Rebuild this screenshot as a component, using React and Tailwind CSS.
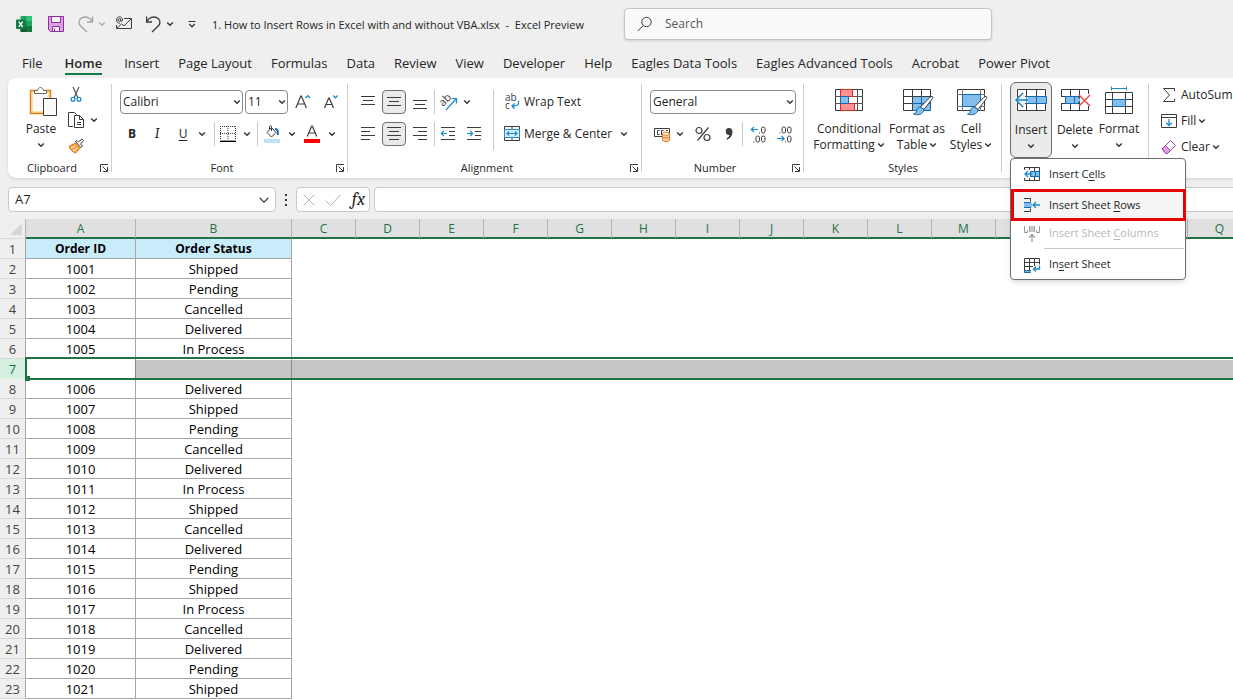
const TABS = [
  "File",
  "Home",
  "Insert",
  "Page Layout",
  "Formulas",
  "Data",
  "Review",
  "View",
  "Developer",
  "Help",
  "Eagles Data Tools",
  "Eagles Advanced Tools",
  "Acrobat",
  "Power Pivot",
];

const COLUMNS = ["C", "D", "E", "F", "G", "H", "I", "J", "K", "L", "M", "N", "O", "P", "Q"];

const ORDERS = [
  ["1001", "Shipped"],
  ["1002", "Pending"],
  ["1003", "Cancelled"],
  ["1004", "Delivered"],
  ["1005", "In Process"],
  null,
  ["1006", "Delivered"],
  ["1007", "Shipped"],
  ["1008", "Pending"],
  ["1009", "Cancelled"],
  ["1010", "Delivered"],
  ["1011", "In Process"],
  ["1012", "Shipped"],
  ["1013", "Cancelled"],
  ["1014", "Delivered"],
  ["1015", "Pending"],
  ["1016", "Shipped"],
  ["1017", "In Process"],
  ["1018", "Cancelled"],
  ["1019", "Delivered"],
  ["1020", "Pending"],
  ["1021", "Shipped"],
];

const INK = "#3b3b3b";
const BLUE = "#1e8bcd";

function Icon({ w = 16, h = 16, className = "", children }) {
  return (
    <svg
      width={w}
      height={h}
      viewBox={`0 0 ${w} ${h}`}
      fill="none"
      stroke={INK}
      className={`shrink-0 overflow-visible ${className}`}
      aria-hidden="true"
    >
      {children}
    </svg>
  );
}

function Chevron({ color = "#333", className = "" }) {
  return (
    <Icon w={8} h={8} className={className}>
      <path d="M1.2 2.5 4 5.2 6.8 2.5" stroke={color} strokeWidth="1.4" />
    </Icon>
  );
}

function ChevronButton({ label, className = "w-3" }) {
  return (
    <button aria-label={label} className={`flex h-6 items-center justify-center ${className}`}>
      <Chevron />
    </button>
  );
}

function ToolButton({ label, active, className = "w-[26px]", children }) {
  return (
    <button
      aria-label={label}
      className={`flex h-6 shrink-0 items-center justify-center ${className} ${
        active ? "rounded border border-[#6e6e6e] bg-[#ebebeb]" : ""
      }`}
    >
      {children}
    </button>
  );
}

function Divider() {
  return <div className="h-6 w-px shrink-0 bg-[#c8c8c8]" />;
}

function Combo({ label, value, className }) {
  return (
    <div className={`relative h-6 ${className}`}>
      <select
        aria-label={label}
        className="h-6 w-full appearance-none rounded border border-[#8a8a8a] bg-white pl-0.5 text-xs text-[#1f1f1f]"
      >
        <option>{value}</option>
      </select>
      <Chevron className="pointer-events-none absolute right-0.5 top-2" />
    </div>
  );
}

function Group({ title, launcher, className, children }) {
  return (
    <section className={`relative flex shrink-0 flex-col ${className}`}>
      <div className="h-20">{children}</div>
      <div
        className={`flex h-5 items-center justify-center text-[11px] ${launcher ? "pr-4" : ""}`}
      >
        {title}
      </div>
      {launcher && (
        <button aria-label={`${title} settings`} className="absolute bottom-1.5 right-1">
          <Icon w={8} h={8}>
            <path d="M.5 8V.5H8M2.5 2.5 7 7M7.5 3v4.5H3" />
          </Icon>
        </button>
      )}
      <div className="absolute bottom-1.5 right-0 top-1.5 w-px bg-[#d0d0d0]" />
    </section>
  );
}

function Lines({ rows }) {
  return (
    <Icon>
      {rows.map(([x, y, w]) => (
        <path key={y} d={`M${x} ${y}.5h${w}`} />
      ))}
    </Icon>
  );
}

function BigButton({ icon, lines, chevron, className = "" }) {
  return (
    <button className={`flex flex-col items-center ${className}`}>
      {icon}
      {lines.map((line, i) => (
        <span key={line} className="flex h-4 items-center gap-0.5 whitespace-nowrap">
          {line}
          {!chevron && i === lines.length - 1 && <Chevron />}
        </span>
      ))}
      {chevron && <Chevron className="mt-1" />}
    </button>
  );
}

function TitleBar() {
  return (
    <header className="flex h-12 items-center pl-4 text-xs">
      <Icon>
        <g stroke="none">
          <rect x="4.500" width="11.500" height="16" rx="1" fill="#21a366" />
          <path d="M10.500 0H15a1 1 0 0 1 1 1v4h-5.500z" fill="#33c481" />
          <path d="M4.500 5h6v5h-6z" fill="#107c41" />
          <path d="M10.500 5H16v5h-5.500z" fill="#21a366" />
          <path d="M4.500 10H16v5a1 1 0 0 1-1 1H5.500a1 1 0 0 1-1-1z" fill="#185c37" />
          <path d="M10.500 10H16v5a1 1 0 0 1-1 1h-4.500z" fill="#107c41" />
          <rect y="3.500" width="9.500" height="9.500" rx="1" fill="#107c41" />
        </g>
        <path d="m2.800 5.600 3.900 5.200M6.700 5.600l-3.900 5.200" stroke="#fff" strokeWidth="1.400" />
      </Icon>
      <button aria-label="Save" className="ml-4">
        <Icon>
          <path d="M.5.5h15v15h-13l-2-2z" fill="#dda0e0" stroke="#8d2fa0" />
          <path d="M3.500.5h9v6h-9zM4.500 10.500h7v5h-7z" fill="#f6f0f7" stroke="#8d2fa0" />
          <path d="M6.500 12.500v3" stroke="#8d2fa0" />
        </Icon>
      </button>
      <button aria-label="Redo" className="ml-3.5">
        <Icon>
          <path d="M14.500.5v5.500H9M14.300 5.800C12 1 7.500.3 4.300 1.600 1 3 0 7 2.300 9.500L9 16" stroke="#a2a2a2" strokeWidth="1.300" />
        </Icon>
      </button>
      <Chevron color="#b0b0b0" className="ml-1" />
      <button aria-label="Email" className="ml-2.5">
        <Icon>
          <path d="M8 2.500H15.500v10H.5V9" />
          <path d="M.8 12.300 5.500 8l2.500 1.800 7.200-7" />
          <circle cx="3.400" cy="4" r="1.300" />
          <path d="M4.700 2.800v2c.2 1 1.700 1 1.800-.8C6.500 2 5.200.8 3.500.8S.6 2 .6 4s1.200 3.300 3.200 3.200" />
        </Icon>
      </button>
      <button aria-label="Undo" className="ml-3.5">
        <Icon>
          <path d="M.6.5v5.500H6M.8 5.800C3 1 7.500.3 10.700 1.600 14 3 15 7 12.700 9.500L6 16" strokeWidth="1.300" />
        </Icon>
      </button>
      <Chevron className="ml-1" />
      <button aria-label="Customize toolbar" className="ml-3.5">
        <Icon w={8}>
          <path d="M.5 5.500h7" />
          <path d="M1.200 8 4 10.700 6.800 8" strokeWidth="1.400" />
        </Icon>
      </button>
      <h1 className="w-[428px] whitespace-pre pl-4 pt-0.5 text-[11px]">
        1. How to Insert Rows in Excel with and without VBA.xlsx  -  Excel Preview
      </h1>
      <label className="flex h-8 w-[368px] items-center gap-3 rounded border border-[#c4c4c4] bg-[#fafafa] px-3 shadow-sm">
        <Icon>
          <circle cx="9.500" cy="6" r="4.700" />
          <path d="M6.200 9.500.8 15" />
        </Icon>
        <input
          type="search"
          aria-label="Search"
          placeholder="Search"
          className="w-full bg-transparent text-xs outline-none placeholder:text-[#555]"
        />
      </label>
    </header>
  );
}

function TabBar() {
  return (
    <nav className="flex h-[30px] items-start gap-[19px] whitespace-nowrap pl-[22px] pt-1.5 text-[13px]">
      {TABS.map((tab) => (
        <a
          key={tab}
          href={`#${tab}`}
          className={`h-[21px] leading-[19px] ${
            tab === "Home" ? "mx-[3px] border-b-2 border-[#107c41] font-semibold" : ""
          }`}
        >
          {tab}
        </a>
      ))}
    </nav>
  );
}

function ClipboardGroup() {
  return (
    <Group title="Clipboard" launcher className="w-[104px]">
      <div className="flex pl-4 pt-2">
        <BigButton
          chevron
          className="w-[34px]"
          lines={["Paste"]}
          icon={
            <Icon w={28} h={35} className="ml-1">
              <path d="M1.500 4.500h20v23h-20z" fill="#fbe0a0" stroke="#e07b1a" strokeWidth="1.400" />
              <path d="M4 7h15v18H4z" fill="#fafafa" stroke="none" />
              <path d="M5.500 7.500v-3h3C9 .5 14 .5 14.500 4.500h3v3z" fill="#fff" stroke="#6a6a6a" />
              <path d="M14.500 12.500h13v17h-13z" fill="#fafafa" />
            </Icon>
          }
        />
        <div className="ml-2.5 flex flex-col gap-2.5">
          <button aria-label="Cut">
            <Icon>
              <path d="M5 1l5 11M11 1 6 12" stroke="#555" strokeWidth="1.200" />
              <circle cx="5" cy="13.300" r="1.900" stroke={BLUE} strokeWidth="1.300" />
              <circle cx="11" cy="13.300" r="1.900" stroke={BLUE} strokeWidth="1.300" />
            </Icon>
          </button>
          <button aria-label="Copy" className="flex items-center gap-1.5">
            <Icon>
              <path d="M5 14.500H.5V.5h6l2 2" />
              <path d="M6.500 3.500h5l4 4v8h-9z" fill="#fff" />
              <path d="M11.500 3.500v4h4M9 10.500h4M9 12.500h4" />
            </Icon>
            <Chevron />
          </button>
          <button aria-label="Format Painter">
            <Icon>
              <path d="M1 8.500 7.500 5l4.500 5.500L7.500 15c-3-1-5-3-6.500-6.500z" fill="#f7a94a" stroke="#d96b10" />
              <path d="M3 9.500c2 0 3-1 4-2M5 12.500c2 0 3-1 4-2.500" stroke="#fff" />
              <path d="M7.500 3.500 13 9.500l1.500-1.500-2-2 3-3.500L14 1l-3.500 3L9 2.500z" fill="#fff" />
            </Icon>
          </button>
        </div>
      </div>
    </Group>
  );
}

function FontGroup() {
  return (
    <Group title="Font" launcher className="w-[236px]">
      <div className="flex flex-col gap-2 pl-2 pt-3">
        <div className="flex items-center gap-0.5">
          <Combo label="Font name" value="Calibri" className="w-[123px]" />
          <Combo label="Font size" value="11" className="w-[43px]" />
          <ToolButton label="Increase font size">
            <Icon>
              <path d="M.8 14 5.800 2h.6l5 12M2.500 10h7.200" strokeWidth="1.200" />
              <path d="m10.500 4 2.300-2.300L15.200 4" stroke={BLUE} strokeWidth="1.300" />
            </Icon>
          </ToolButton>
          <ToolButton label="Decrease font size">
            <Icon>
              <path d="M1.500 14 5.700 4h.6l4.200 10M3 10.500h6" strokeWidth="1.200" />
              <path d="m10 1.500 2.300 2.300 2.400-2.300" stroke={BLUE} strokeWidth="1.300" />
            </Icon>
          </ToolButton>
        </div>
        <div className="flex items-center">
          <ToolButton label="Bold" className="w-6">
            <span className="font-bold">B</span>
          </ToolButton>
          <ToolButton label="Italic">
            <span className="font-serif text-sm italic">I</span>
          </ToolButton>
          <ToolButton label="Underline">
            <span className="underline underline-offset-2">U</span>
          </ToolButton>
          <ChevronButton label="Underline styles" />
          <div className="ml-1.5" />
          <Divider />
          <ToolButton label="Borders">
            <Icon>
              <path d="M0 .5h16M0 7.500h16M.5 0v14M8 0v14M15.500 0v14" strokeDasharray="1 1" />
              <path d="M0 15.300h16" stroke="#000" strokeWidth="1.400" />
            </Icon>
          </ToolButton>
          <ChevronButton label="Border styles" />
          <div className="ml-1" />
          <Divider />
          <ToolButton label="Fill color" className="w-7">
            <Icon h={18}>
              <path d="M7.500 2.500 12 7.500l-4.500 4.500L3 7.500z" fill="#fff" />
              <path d="M7.500 6V1.500c0-1-2-1-2 0V4" />
              <path d="M11 4c3 0 3 2 2.800 6" stroke="#1669ad" strokeWidth="2" />
              <path d="M0 14h16v4H0z" fill="#bfe3f5" stroke="none" />
            </Icon>
          </ToolButton>
          <ChevronButton label="Fill colors" />
          <ToolButton label="Font color" className="w-7">
            <Icon h={18}>
              <path d="M3.300 11.500 7.700 1h.6l4.400 10.500M5 8h6" strokeWidth="1.200" />
              <path d="M0 14h16v4H0z" fill="#f00" stroke="none" />
            </Icon>
          </ToolButton>
          <ChevronButton label="Font colors" />
        </div>
      </div>
    </Group>
  );
}

function AlignmentGroup() {
  return (
    <Group title="Alignment" launcher className="w-[294px]">
      <div className="flex pt-3">
        <div className="flex w-[145px] flex-col gap-2 pl-2">
          <div className="flex items-center">
            <ToolButton label="Top align">
              <Lines rows={[[0, 2, 14], [2, 6, 10], [0, 10, 14]]} />
            </ToolButton>
            <ToolButton label="Middle align" active className="w-6">
              <Lines rows={[[1, 3, 14], [3, 7, 10], [1, 11, 14]]} />
            </ToolButton>
            <ToolButton label="Bottom align">
              <Lines rows={[[2, 6, 14], [4, 10, 10], [2, 14, 14]]} />
            </ToolButton>
            <div className="ml-0.5" />
            <Divider />
            <ToolButton label="Orientation" className="ml-0.5 w-6">
              <Icon w={18} h={18}>
                <text x="0" y="11" fontSize="11" stroke="none" fill={INK} transform="rotate(-45 5 9)">
                  ab
                </text>
                <path d="M6 17 16 6M11.500 5.500h5v5" stroke={BLUE} strokeWidth="1.200" />
              </Icon>
            </ToolButton>
            <ChevronButton label="Orientation options" />
          </div>
          <div className="flex items-center">
            <ToolButton label="Align left">
              <Lines rows={[[0, 1, 14], [0, 5, 9], [0, 9, 14], [0, 13, 9]]} />
            </ToolButton>
            <ToolButton label="Center" active className="w-6">
              <Lines rows={[[1, 1, 14], [3, 5, 10], [1, 9, 14], [3, 13, 10]]} />
            </ToolButton>
            <ToolButton label="Align right">
              <Lines rows={[[2, 1, 14], [7, 5, 9], [2, 9, 14], [7, 13, 9]]} />
            </ToolButton>
            <div className="ml-0.5" />
            <Divider />
            <ToolButton label="Decrease indent">
              <Icon>
                <path d="M1 1.500h14M9 5.500h6M9 9.500h6M1 13.500h14" />
                <path d="M7 7.500H1.500M3.800 5 1.300 7.500 3.800 10" stroke={BLUE} strokeWidth="1.200" />
              </Icon>
            </ToolButton>
            <ToolButton label="Increase indent">
              <Icon>
                <path d="M1 1.500h14M9 5.500h6M9 9.500h6M1 13.500h14" />
                <path d="M1 7.500h5.500M4.200 5l2.500 2.500L4.200 10" stroke={BLUE} strokeWidth="1.200" />
              </Icon>
            </ToolButton>
          </div>
        </div>
        <div className="h-[60px] w-px bg-[#c8c8c8]" />
        <div className="flex flex-col gap-2 pl-2.5">
          <button className="flex h-6 items-center gap-1">
            <Icon>
              <g stroke="none" fill={INK} fontSize="10">
                <text x="1" y="7">
                  ab
                </text>
                <text x="1" y="15">
                  c
                </text>
              </g>
              <path d="M14.500 7v2.500c0 2-1.500 2.500-6.500 2.500M10.500 9.500 8 12l2.500 2.800" stroke={BLUE} strokeWidth="1.300" />
            </Icon>
            Wrap Text
          </button>
          <button className="flex h-6 items-center gap-1">
            <Icon>
              <path d="M.5.5h15v14H.5zM8 0v4M8 11v4" />
              <path d="M.5 3.500h15v8H.5z" fill="#d6ebf9" stroke={BLUE} />
              <path d="M3 7.500h10M5 5.500l-2 2 2 2M11 5.500l2 2-2 2" stroke={BLUE} strokeWidth="1.200" />
            </Icon>
            Merge &amp; Center
            <Chevron className="ml-1" />
          </button>
        </div>
      </div>
    </Group>
  );
}

function NumberGroup() {
  return (
    <Group title="Number" launcher className="w-[162px]">
      <div className="flex flex-col gap-2 pl-2 pt-3">
        <Combo label="Number format" value="General" className="w-[146px]" />
        <div className="flex items-center">
          <ToolButton label="Accounting format" className="w-6">
            <Icon>
              <path d="M.5 2.500h15v8H.5z" />
              <path d="M5.500 4.500h-2v4h2M7.500 9V4.500h2M12 4.500h2" />
              <path d="M8.500 8v6.500c1 1.300 6 1.300 7 0V8" fill="#fbd3a3" stroke="#e07b1a" />
              <path d="M8.500 11c1 1.300 6 1.300 7 0" stroke="#e07b1a" />
              <ellipse cx="12" cy="7.700" rx="3.500" ry="1.500" fill="#fff" stroke="#e07b1a" />
            </Icon>
          </ToolButton>
          <ChevronButton label="Currencies" />
          <ToolButton label="Percent style" className="ml-1 w-[26px]">
            <Icon>
              <path d="M13.500 1.500 2.500 14.500" strokeWidth="1.200" />
              <circle cx="4" cy="4.500" r="3" strokeWidth="1.200" />
              <circle cx="12" cy="11.500" r="3" strokeWidth="1.200" />
            </Icon>
          </ToolButton>
          <ToolButton label="Comma style">
            <Icon>
              <path
                d="M8 2a3.500 3.500 0 1 0 .5 7c-.3 1.500-1.500 2.700-3 3.500l.8 1.200C9.500 12 11.500 9.500 11.500 6 11.500 3.500 10 2 8 2z"
                fill={INK}
                stroke="none"
              />
            </Icon>
          </ToolButton>
          <Divider />
          <ToolButton label="Increase decimal" className="ml-0.5 w-[26px]">
            <Icon w={17} h={17}>
              <path d="M8 3.500H1.500M4 1 1.300 3.500 4 6" stroke={BLUE} strokeWidth="1.200" />
              <rect x="11.500" y="1" width="3.500" height="6" rx="1.700" />
              <rect x="6" y="10" width="3.500" height="6" rx="1.700" />
              <rect x="11.500" y="10" width="3.500" height="6" rx="1.700" />
              <path d="M9 7h1M3.500 16h1" />
            </Icon>
          </ToolButton>
          <ToolButton label="Decrease decimal">
            <Icon w={17} h={17}>
              <path d="M1 12.500h7M5.500 10 8 12.500 5.500 15" stroke={BLUE} strokeWidth="1.200" />
              <rect x="6" y="1" width="3.500" height="6" rx="1.700" />
              <rect x="11.500" y="1" width="3.500" height="6" rx="1.700" />
              <rect x="11.500" y="10" width="3.500" height="6" rx="1.700" />
              <path d="M3.500 7h1M9 16h1" />
            </Icon>
          </ToolButton>
        </div>
      </div>
    </Group>
  );
}

function Brush() {
  return (
    <>
      <path d="M29 8.500c1 0 1 1 .5 2L21 21.500 17.500 19 27 9.200c.7-.5 1.300-.8 2-.7z" fill="#fff" />
      <path d="M17.300 19c-3 0-3.500 2-3.800 4-.2 1.500-1.500 2.500-3 3 4 1.500 9.500 1 10.500-4.500z" fill="#83beec" stroke="#1669ad" />
    </>
  );
}

function StylesGroup() {
  return (
    <Group title="Styles" className="w-[198px]">
      <div className="flex pl-2 pt-2.5">
        <BigButton
          className="w-[74px]"
          lines={["Conditional", "Formatting"]}
          icon={
            <Icon w={28} h={33}>
              <path d="M.5 1.500h27v21H.5z" fill="#fff" />
              <path d="M5.500 1v22M22.500 1v22M0 8.500h28M0 15.500h28" stroke="#555" />
              <path d="M5.500 1.500h12v7h-12zM5.500 15.500h14v7h-14z" fill="#ff9494" stroke="#e0281e" />
              <path d="M5.500 8.500h8v7h-8z" fill="#83beec" stroke="#1669ad" />
            </Icon>
          }
        />
        <BigButton
          className="w-[62px]"
          lines={["Format as", "Table"]}
          icon={
            <Icon w={30} h={33}>
              <path d="M1.500 1.500h27v21h-27z" fill="#fff" />
              <path d="M10.500 8.500h18v14h-18z" fill="#83beec" stroke="#1669ad" />
              <path d="M1 8.500h28M1 15.500h9M10.500 1v22M19.500 1v7" />
              <path d="M10 15.500h19M19.500 8v15" stroke="#1669ad" />
              <g transform="translate(1 0)">
                <Brush />
              </g>
            </Icon>
          }
        />
        <BigButton
          className="w-[46px]"
          lines={["Cell", "Styles"]}
          icon={
            <Icon w={30} h={33}>
              <path d="M1.500 1.500h27v21h-27z" fill="#fff" />
              <path d="M6.500 1v22M24.500 1v22M1 6.500h28M1 18.500h28" stroke="#777" />
              <path d="M6.500 6.500h18v12h-18z" fill="#83beec" stroke="#1669ad" />
              <g transform="translate(1 0)">
                <Brush />
              </g>
            </Icon>
          }
        />
      </div>
    </Group>
  );
}

function MenuItem({ icon, before, accessKey, after, className = "" }) {
  return (
    <button
      role="menuitem"
      className={`flex w-full items-center gap-2 pl-[13px] text-left text-[11px] ${className}`}
    >
      {icon}
      <span>
        {before}
        <u className="underline-offset-2">{accessKey}</u>
        {after}
      </span>
    </button>
  );
}

function InsertMenu() {
  return (
    <div
      role="menu"
      className="absolute left-0 top-full z-10 w-44 rounded border border-[#6e6e6e] bg-white shadow-md"
    >
      <MenuItem
        className="h-[30px]"
        before="Insert C"
        accessKey="e"
        after="lls"
        icon={
          <Icon w={17}>
            <path d="M.5 1.500h15v13H.5zM5.500 1v14M10.500 1v14M0 5.500h16M0 10.500h16" />
            <path d="M6.500 5.500h9v5h-9zM11.500 5v6" fill="#83beec" stroke="#1669ad" />
            <path d="M0 4h6v8H0z" fill="#fff" stroke="none" />
            <path d="M8 8H1M4 5 1 8l3 3" stroke={BLUE} strokeWidth="1.300" />
          </Icon>
        }
      />
      <div className="-mr-px border-[3px] border-[#e60505] bg-[#f5f5f5]">
        <MenuItem
          className="-ml-[3px] h-[26px]"
          before="Insert Sheet "
          accessKey="R"
          after="ows"
          icon={
            <Icon w={17}>
              <path d="M0 1.500h6.500v3M0 14.500h6.500v-3" />
              <path d="M0 6h8v4H0z" fill="#83beec" stroke="none" />
              <path d="M0 5.500h7M0 10.500h7" stroke="#1669ad" />
              <path d="M16 8H9M12 5 9 8l3 3" stroke={BLUE} strokeWidth="1.300" />
            </Icon>
          }
        />
      </div>
      <MenuItem
        className="h-[25px] text-[#b8b8b8]"
        before="Insert Sheet "
        accessKey="C"
        after="olumns"
        icon={
          <Icon w={17}>
            <path d="M.5 0v6.500h3V4M15.500 0v6.500h-3V4" stroke="#9a9a9a" />
            <path d="M6 0h4v6H6z" fill="#c8c8c8" stroke="none" />
            <path d="M5.500 0v6M10.500 0v6" stroke="#a5a5a5" />
            <path d="M8 16V9M5 11.500 8 8.500l3 3" stroke="#9a9a9a" strokeWidth="1.300" />
          </Icon>
        }
      />
      <div className="mb-px ml-[33px] mr-px mt-0.5 h-px bg-[#c8c8c8]" />
      <MenuItem
        className="h-[29px]"
        before="In"
        accessKey="s"
        after="ert Sheet"
        icon={
          <Icon w={17}>
            <path d="M7 13.500H.5v-12h15v6M0 5.500h16M0 9.500h9M5.500 1v12M10.500 1v8" />
            <path d="M.5 13.500h5l1 2h-6z" fill="#83beec" stroke="#1669ad" />
            <path d="M15.500 8.500V12H9.500M12 9.500 9.500 12l2.500 2.500" stroke={BLUE} strokeWidth="1.300" />
          </Icon>
        }
      />
    </div>
  );
}

function CellsGroup() {
  return (
    <Group title="" className="w-[147px]">
      <div className="flex pl-2 pt-1">
        <div className="relative">
          <BigButton
            chevron
            className="h-[76px] w-[42px] rounded-md border border-[#6e6e6e] bg-[#ebebeb] pt-[5px]"
            lines={["Insert"]}
            icon={
              <Icon w={32} h={34}>
                <path d="M2.500 1.500h28v21h-28zM11.500 1v22M21.500 1v22" fill="#fff" />
                <path d="M2 8.500h28M2 15.500h28" />
                <path d="M11.500 8.500h20v7h-20zM21.500 8v8" fill="#83beec" stroke="#1669ad" />
                <path d="M0 12 8 4l2 4v8l-2 4z" fill="#ebebeb" stroke="none" />
                <path d="M13 12H1M8 5l-7 7 7 7" stroke={BLUE} strokeWidth="1.500" />
                <path d="M13 10H5.500M13 14H5.500" stroke="#fff" />
              </Icon>
            }
          />
          <InsertMenu />
        </div>
        <BigButton
          chevron
          className="w-[46px] pt-1.5"
          lines={["Delete"]}
          icon={
            <Icon w={32} h={34}>
              <path d="M2.500 1.500h27v21h-27zM11.500 1v22M20.500 1v22M2 8.500h28M2 15.500h28" fill="#fff" />
              <path d="M0 9h7v6H0z" fill="#fff" stroke="none" />
              <path d="M6.500 8.500h12l4 3.500-4 3.500h-12zM15.500 8v8" fill="#83beec" stroke="#1669ad" />
              <path d="M21 6h11v12H21z" fill="#fff" stroke="none" />
              <path d="m20 7 11 11M31 7 20 18" stroke="#ee4a4a" strokeWidth="1.500" />
            </Icon>
          }
        />
        <BigButton
          chevron
          className="w-[42px] pt-1"
          lines={["Format"]}
          icon={
            <Icon w={28} h={35}>
              <path d="M.5 6.500h27v21H.5zM7.500 6v22M20.500 6v22M0 13.500h28M0 20.500h28" fill="#fff" />
              <path d="M7.500 13.500h13v7h-13z" fill="#83beec" stroke="#1669ad" />
              <path d="M6.500 2.500h15M6.500.5v4M21.500.5v4" stroke={BLUE} />
            </Icon>
          }
        />
      </div>
    </Group>
  );
}

function EditingGroup() {
  return (
    <section className="flex shrink-0 flex-col gap-2 whitespace-nowrap pl-3 pt-2">
      <button className="flex h-[18px] items-center gap-1">
        <Icon>
          <path d="M13.500 4V1.500h-11l6 6.500-6 6.500h11V12" />
        </Icon>
        AutoSum
      </button>
      <button className="flex h-[18px] items-center gap-1">
        <Icon>
          <path d="M.5 1.500h15v13H.5zM0 4.500h16" />
          <path d="M8 6v6.500M5.300 9.800 8 12.500l2.700-2.700" stroke={BLUE} strokeWidth="1.300" />
        </Icon>
        Fill
        <Chevron className="-ml-0.5" />
      </button>
      <button className="flex h-[18px] items-center gap-1">
        <Icon>
          <path d="M1 10 9.500 1.500l5 5L6.500 14.500 5 14.500z" fill="#fff" stroke="#9b3fae" />
          <path d="M1 10 4.500 6.500l5 5-3 3H5z" fill="#dda0e0" stroke="#9b3fae" />
        </Icon>
        Clear
        <Chevron className="-ml-0.5" />
      </button>
    </section>
  );
}

function FormulaBar() {
  return (
    <div className="mt-[9px] flex h-[25px] pl-2">
      <label className="flex w-[268px] shrink-0 items-center rounded border border-[#c8c8c8] bg-white px-1.5">
        <input
          aria-label="Name box"
          defaultValue="A7"
          className="min-w-0 flex-1 bg-transparent text-[13px] outline-none"
        />
        <Icon w={10} h={10}>
          <path d="m.8 3 4.200 4.200L9.200 3" strokeWidth="1.200" />
        </Icon>
      </label>
      <Icon w={20} h={25}>
        <path d="M10 7h0v2M10 12v2M10 17v2" strokeWidth="2" />
      </Icon>
      <div className="flex w-[74px] shrink-0 items-center justify-between rounded border border-[#c8c8c8] bg-white pl-1.5 pr-1">
        <button aria-label="Cancel">
          <Icon w={12} h={12}>
            <path d="m.5.5 11 11M11.500.5l-11 11" stroke="#b0b0b0" />
          </Icon>
        </button>
        <button aria-label="Enter">
          <Icon w={16} h={12}>
            <path d="m.5 6.500 5 5L15.500.8" stroke="#b0b0b0" />
          </Icon>
        </button>
        <button aria-label="Insert function" className="font-serif text-lg italic leading-5">
          fx
        </button>
      </div>
      <input
        aria-label="Formula"
        className="-mr-2 ml-1 min-w-0 flex-1 rounded border border-[#c8c8c8] bg-white px-2 outline-none"
      />
    </div>
  );
}

function SheetRow({ number, row }) {
  const cell = "border-b border-r border-[#a6a6a6]";
  return (
    <tr className="h-5">
      <th className="border-b border-r border-b-[#d8d8d8] border-r-[#a6a6a6] bg-[#efefef] font-normal text-[#444]">
        {number}
      </th>
      <td className={cell}>{row[0]}</td>
      <td className={cell}>{row[1]}</td>
      <td colSpan={COLUMNS.length} />
    </tr>
  );
}

function SelectedRow({ number }) {
  return (
    <tr className="relative h-5">
      <th className="border-r border-[#a6a6a6] bg-[#d3f0e0] font-normal text-[#1e7145]">
        {number}
        <div className="pointer-events-none absolute -top-0.5 left-[25px] right-0 h-[23px] border-y-2 border-l-2 border-[#217346]">
          <div className="absolute -bottom-[3px] -left-0.5 size-[5px] bg-[#217346]" />
        </div>
      </th>
      <td className="border-r border-[#8a8a8a]" />
      <td className="border-y border-r border-y-white border-r-[#8a8a8a] bg-[#c6c6c6] bg-clip-padding" />
      <td colSpan={COLUMNS.length} className="border-y border-white bg-[#c6c6c6] bg-clip-padding" />
    </tr>
  );
}

function Sheet() {
  const head =
    "border-b-2 border-r border-b-[#217346] border-r-[#b4b4b4] bg-[#e0e0e0] p-0 pt-0.5 text-xs leading-4 font-normal text-[#217346]";
  const title = "border-b border-r border-[#a6a6a6] bg-[#c9ecfb] text-xs font-bold";
  return (
    <div className="mt-[7px] min-h-0 flex-1 overflow-hidden bg-white">
      <table className="w-0 table-fixed border-separate border-spacing-0 text-center text-[13px] leading-[18px] text-black">
        <colgroup>
          <col className="w-[26px]" />
          <col className="w-[110px]" />
          <col className="w-[156px]" />
          {COLUMNS.map((c) => (
            <col key={c} className="w-16" />
          ))}
        </colgroup>
        <thead>
          <tr className="h-5">
            <th className="border-b border-r border-b-[#d8d8d8] border-r-[#b4b4b4] bg-[#efefef] p-0">
              <Icon w={12} h={12} className="ml-2.5">
                <path d="M12 0v12H0z" fill="#d6d6d6" stroke="none" />
              </Icon>
            </th>
            {["A", "B", ...COLUMNS].map((c) => (
              <th key={c} className={head}>
                {c}
              </th>
            ))}
          </tr>
        </thead>
        <tbody className="[&_td]:p-0 [&_th]:p-0">
          <tr className="h-5">
            <th className="border-b border-r border-b-[#d8d8d8] border-r-[#a6a6a6] bg-[#efefef] font-normal text-[#444]">
              1
            </th>
            <td className={title}>Order ID</td>
            <td className={title}>Order Status</td>
            <td colSpan={COLUMNS.length} />
          </tr>
          {ORDERS.map((row, i) =>
            row ? <SheetRow key={i} number={i + 2} row={row} /> : <SelectedRow key={i} number={i + 2} />
          )}
        </tbody>
      </table>
    </div>
  );
}

export default function App() {
  return (
    <div className="flex h-screen flex-col overflow-hidden bg-[#efefef] font-['Open_Sans','Noto_Sans',sans-serif] text-xs text-[#262626]">
      <TitleBar />
      <TabBar />
      <div className="relative z-10 ml-2 flex h-[100px] shrink-0 rounded-l-lg bg-white shadow">
        <ClipboardGroup />
        <FontGroup />
        <AlignmentGroup />
        <NumberGroup />
        <StylesGroup />
        <CellsGroup />
        <EditingGroup />
      </div>
      <FormulaBar />
      <Sheet />
    </div>
  );
}
